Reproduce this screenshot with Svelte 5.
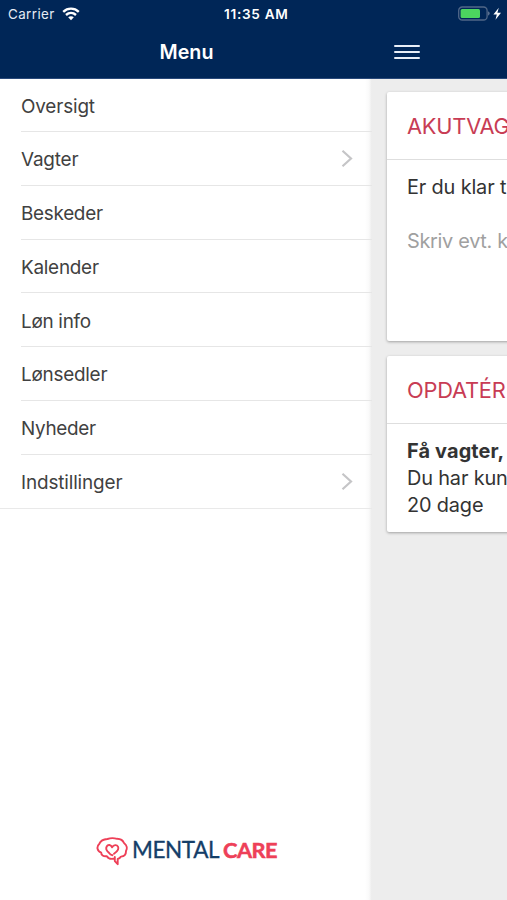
<script>
  const items = [
    { label: 'Oversigt', width: 74 },
    { label: 'Vagter', width: 57.5, arrow: true },
    { label: 'Beskeder', width: 82 },
    { label: 'Kalender', width: 78 },
    { label: 'Løn info', width: 70 },
    { label: 'Lønsedler', width: 86.5 },
    { label: 'Nyheder', width: 75 },
    { label: 'Indstillinger', width: 101.5, arrow: true }
  ];
</script>

<div class="app">
  <header>
    <div class="status">
      <span class="carrier">Carrier</span>
      <svg class="wifi" width="18" height="14" viewBox="0 0 18 14" fill="none" stroke="#fff" stroke-width="2.4">
        <path d="M1.2 4.8C5.7.6 12.3.6 16.8 4.8" />
        <path d="M4 8c3-2.7 7-2.7 10 0" />
        <path d="M9 13.2 6.2 10.3c1.6-1.4 4-1.4 5.6 0z" fill="#fff" stroke="none" />
      </svg>
      <span class="time">11:35 AM</span>
      <svg class="battery" width="46" height="16" viewBox="0 0 46 16">
        <rect x=".7" y="1" width="28.4" height="13" rx="3.6" fill="none" stroke="#506788" stroke-width="1.3" />
        <rect x="2.6" y="3" width="19.4" height="9" rx="1.5" fill="#4cd55f" />
        <path d="M30.3 5.3q2.5 2.2 0 4.5z" fill="#8292aa" />
        <path d="M40.8 1.8 35.4 8.6h3.4l-1.3 5.2 5.5-7.1h-3.6z" fill="#fff" />
      </svg>
    </div>
    <div class="bar">
      <h1>Menu</h1>
      <div class="burger"><i></i><i></i><i></i></div>
    </div>
  </header>
  <main>
    <nav>
      <ul>
        {#each items as item}
          <li>
            <div class="row">
              <svg class="label" width="120" height="28"><text x="0" y="21.7" textLength={item.width}>{item.label}</text></svg>
              {#if item.arrow}
                <svg class="chevron" width="12" height="18" viewBox="0 0 12 18"><path d="M1.5 1.8 10 9.5l-8.5 7.7" /></svg>
              {/if}
            </div>
          </li>
        {/each}
      </ul>
      <div class="logo">
        <svg width="184" height="32" viewBox="0 0 184 32">
          <g fill="none" stroke="#ee4058" stroke-width="1.9" stroke-linejoin="round" stroke-linecap="round">
            <path d="M18.8 23.4c-3.2.9-6.5.2-7.900-2.200-3.700.4-5.800-1.100-5.700-3.600C1.200 16.200.1 11.800 3.400 8.700 4.600 5.500 8 4.200 11.500 4c3-1.200 6.900-1 9.700-.2 3.200.2 5.700 1.600 6.800 4.200 2.800 2 3.500 5.300 2 7.900.1 3.300-1.900 5.500-5 5.700-.8 1.300-1.900 2.100-3.300 2.300v5.300l-2.900-3.100v-4.100" />
            <path d="M16.500 20.200c-1.500-.2-2.700-1.100-3.600-2.400-2.500-2.300-3.300-4.500-2.200-6.400 1.300-2.200 4.300-1.800 5.400.9 1.600-2.700 4.700-2.900 5.900-.7 1.300 2.500-1 5.100-4 7.100" />
          </g>
          <text x="36" y="23" textLength="87.5" class="mental">MENTAL</text>
          <text x="127" y="23" textLength="54.5" class="care">CARE</text>
        </svg>
      </div>
    </nav>
    <section class="content">
      <article class="first">
        <h2>AKUTVAG</h2>
        <p>Er du klar t</p>
        <p class="placeholder">Skriv evt. k</p>
      </article>
      <article class="second">
        <h2>OPDATÉR</h2>
        <p class="strong">Få vagter,</p>
        <p>Du har kun</p>
        <p>20 dage</p>
      </article>
    </section>
  </main>
</div>

<style>
  :global(body) { margin: 0; background: #fff; }
  .app { width: 507px; height: 900px; overflow: hidden; display: flex; flex-direction: column; font-family: Inter, "Liberation Sans", sans-serif; color: #3b3b3b; }
  header { height: 79px; flex: none; box-sizing: border-box; background: #002657; color: #fff; border-bottom: 1px solid #29497a; }
  .status { height: 27px; display: grid; grid-template-columns: 62px 162px 234px 1fr; align-items: center; }
  .carrier { font-size: 13.4px; padding-left: 8px; letter-spacing: .4px; color: #e5ebf4; }
  .time { font-size: 13.6px; font-weight: 600; letter-spacing: .7px; white-space: nowrap; }
  .bar { height: 50px; display: flex; align-items: center; }
  h1 { width: 373px; margin: 0; text-align: center; font-size: 19.7px; font-weight: 600; line-height: 50px; }
  .burger { width: 26px; margin-left: 20.5px; display: flex; flex-direction: column; gap: 4px; }
  .burger i { height: 2.3px; background: #e8eef7; border-radius: 1px; }
  main { display: flex; flex: 1; min-height: 0; }
  nav { width: 372px; flex: none; display: flex; flex-direction: column; justify-content: space-between; background: linear-gradient(90deg, #fff 365px, #fafafa 369px, #ebebeb 372px); }
  ul { margin: 0; padding: 0; list-style: none; border-bottom: 1px solid #e9e9e9; }
  li { padding-left: 21px; height: 53.75px; }
  li:first-child { height: 53px; }
  .row { height: 100%; box-sizing: border-box; border-bottom: 1px solid #e6e6e6; display: flex; align-items: center; justify-content: space-between; }
  li:last-child .row { border: 0; }
  .label { font-size: 18.9px; fill: #414141; overflow: visible; }
  .chevron { margin-right: 19px; fill: none; stroke: #c5c5c7; stroke-width: 2.2; overflow: visible; }
  .logo { height: 65px; padding-left: 96px; }
  .logo text { font-family: Lato, sans-serif; font-size: 22.5px; }
  .logo .mental { fill: #143e68; stroke: #143e68; stroke-width: .3px; }
  .logo .care { font-size: 21.8px; fill: #ee4058; font-weight: 700; stroke: #ee4058; stroke-width: .5px; }
  .content { width: 120px; flex: none; padding: 13px 0 0 15px; background: #ededed; display: flex; flex-direction: column; gap: 15px; }
  article { width: 160px; box-sizing: border-box; flex: none; background: #fff; border-radius: 2px; box-shadow: 0 1px 3px rgba(0, 0, 0, .32); }
  .first { height: 249px; }
  .second { height: 176px; }
  h2 { margin: 0 0 14px; padding: 0 0 0 20px; height: 68px; box-sizing: border-box; border-bottom: 1px solid #dedede; display: flex; align-items: center; font-weight: 400; font-size: 21.8px; letter-spacing: -.2px; color: #c83c54; }
  p { margin: 0; padding-left: 20px; font-size: 19.9px; line-height: 27px; letter-spacing: -.15px; white-space: nowrap; color: #333; }
  .placeholder { margin-top: 27px; letter-spacing: -.3px; color: #a0a0a0; }
  .strong { font-weight: 700; letter-spacing: .15px; }
</style>
